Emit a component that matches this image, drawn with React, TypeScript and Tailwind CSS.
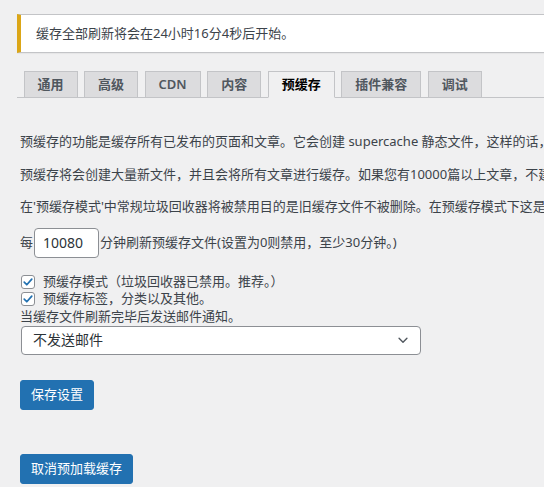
import { useState } from 'react'

const tabs = ['通用', '高级', 'CDN', '内容', '预缓存', '插件兼容', '调试']

function CheckBox({ label, checked }: { label: string; checked: boolean }) {
  return (
    <label className="flex h-[17px] items-center">
      <span className="ml-[1px] flex h-[14px] w-[14px] items-center justify-center rounded-[3px] border border-[#8c8f94] bg-white">
        {checked && (
          <svg viewBox="0 0 14 14" className="h-[12px] w-[12px]">
            <path d="M2.6 7.2 L5.6 10.2 L11.4 3.6" fill="none" stroke="#2271b1" strokeWidth="2" strokeLinecap="round" strokeLinejoin="round" />
          </svg>
        )}
      </span>
      <span className="ml-[8px]">{label}</span>
    </label>
  )
}

export default function App() {
  const [active] = useState('预缓存')

  return (
    <div
      className="h-[487px] w-[544px] overflow-hidden bg-[#f0f0f1] pt-[14px] text-[13px] text-[#3c434a]"
      style={{ fontFamily: '"Noto Sans", "Noto Sans CJK SC", sans-serif' }}
    >
      <div className="ml-[17px] w-[900px]">
        {/* notice */}
        <div className="flex h-[39px] items-center border border-l-4 border-[#c3c4c7] border-l-[#dba617] bg-white pl-[15px] shadow-[0_1px_1px_rgba(0,0,0,0.04)]">
          缓存全部刷新将会在24小时16分4秒后开始。
        </div>

        {/* tabs */}
        <div className="mt-[18px] flex items-end border-b border-[#c3c4c7]">
          {tabs.map((t) => (
            <div
              key={t}
              className={
                t === active
                  ? 'ml-[6.5px] -mb-px flex h-[27px] items-center border border-[#c3c4c7] border-b-[#f0f0f1] bg-[#f0f0f1] px-[13px] text-[13px] font-semibold text-black'
                  : 'ml-[6.5px] -mb-px flex h-[27px] items-center border border-[#c3c4c7] bg-[#dcdcde] px-[13px] text-[13px] font-semibold text-[#50575e]'
              }
            >
              {t}
            </div>
          ))}
        </div>

        <div className="whitespace-nowrap pl-[3px] leading-[19.5px]">
          <p className="mt-[34px]">
            预缓存的功能是缓存所有已发布的页面和文章。它会创建 supercache 静态文件，这样的话，未知的访客（包括机器人）将会命中一个缓存文件。
          </p>
          <p className="mt-[13px]">
            预缓存将会创建大量新文件，并且会将所有文章进行缓存。如果您有10000篇以上文章，不建议使用该功能。
          </p>
          <p className="mt-[13px]">
            在'预缓存模式'中常规垃圾回收器将被禁用目的是旧缓存文件不被删除。在预缓存模式下这是推荐的设置。
          </p>

          <div className="mt-[11px] flex h-[30px] items-center">
            <span>每</span>
            <input
              readOnly
              value="10080"
              className="mx-[1px] h-[30px] w-[65px] rounded-[4px] border border-[#8c8f94] bg-white px-[8px] text-[14px] text-[#2c3338] outline-none"
            />
            <span>分钟刷新预缓存文件(设置为0则禁用，至少30分钟。)</span>
          </div>

          <div className="mt-[16px]">
            <CheckBox label="预缓存模式（垃圾回收器已禁用。推荐。）" checked />
            <CheckBox label="预缓存标签，分类以及其他。" checked />
            <div className="flex h-[18px] items-center">当缓存文件刷新完毕后发送邮件通知。</div>
          </div>

          <div className="ml-[1px] flex h-[29px] w-[400px] items-center justify-between rounded-[4px] border border-[#8c8f94] bg-white pl-[11px] pr-[10px] text-[14px] text-[#2c3338]">
            <span>不发送邮件</span>
            <svg viewBox="0 0 16 16" className="h-[14px] w-[14px]">
              <path d="M3.5 6 L8 10.5 L12.5 6" fill="none" stroke="#50575e" strokeWidth="1.6" strokeLinecap="round" strokeLinejoin="round" />
            </svg>
          </div>

          <button className="mt-[25px] flex h-[30px] items-center rounded-[3px] border border-[#2271b1] bg-[#2271b1] px-[10px] text-[13px] text-white">
            保存设置
          </button>

          <button className="mt-[44px] flex h-[30px] items-center rounded-[3px] border border-[#2271b1] bg-[#2271b1] px-[10px] text-[13px] text-white">
            取消预加载缓存
          </button>
        </div>
      </div>
    </div>
  )
}
